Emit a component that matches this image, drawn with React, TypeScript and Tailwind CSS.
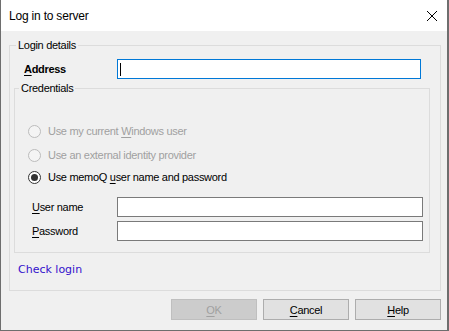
import React from 'react';

function Radio({ label, checked, disabled }: { label: React.ReactNode; checked?: boolean; disabled?: boolean }) {
    return (
        <div className="flex items-center h-[22px]">
            <span
                className={`ml-[13px] w-[13px] h-[13px] rounded-full border flex items-center justify-center ${
                    disabled ? 'border-[#bcbcbc] bg-[#f4f4f4]' : 'border-[#333333] bg-white'
                }`}
            >
                {checked && <span className="w-[7px] h-[7px] rounded-full bg-[#333333]" />}
            </span>
            <span className={`ml-[7px] ${disabled ? 'text-[#a0a0a0]' : 'text-black'}`}>{label}</span>
        </div>
    );
}

export default function App() {
    return (
        <div className="w-[449px] h-[331px] bg-[#f0f0f0] border-l border-b border-r-2 border-[#6e6e6e] text-[11px] tracking-[-0.3px] leading-[16px] text-black flex flex-col font-['Liberation_Sans',Arial,sans-serif]">
            {/* Title bar */}
            <div className="h-[31px] bg-white flex items-center justify-between shrink-0">
                <span className="ml-[8px] text-[12px] tracking-[-0.2px]">Log in to server</span>
                <svg width="12" height="12" viewBox="0 0 12 12" className="mr-[9px]">
                    <path d="M1 1 L11 11 M11 1 L1 11" stroke="#000" strokeWidth="1" fill="none" />
                </svg>
            </div>

            {/* Body */}
            <div className="pt-[6px] pl-[8px]">
                <fieldset className="w-[432px] border border-[#dcdcdc] p-0 m-0 pb-[12px]">
                    <legend className="ml-[6px] px-[2px] leading-[16px]">Login details</legend>

                    {/* Address */}
                    <div className="flex items-center mt-[6px] h-[20px]">
                        <span className="ml-[14px] w-[93px] font-bold">
                            <u className="underline-offset-2">A</u>ddress
                        </span>
                        <div className="w-[304px] h-[20px] bg-white border border-[#0078d7] flex items-center">
                            <span className="ml-[2px] w-px h-[13px] bg-black" />
                        </div>
                    </div>

                    {/* Credentials */}
                    <fieldset className="ml-[4px] mt-[1px] w-[416px] border border-[#dcdcdc] p-0 pb-[11px]">
                        <legend className="ml-[4px] px-[2px] leading-[16px]">Credentials</legend>
                        <div className="mt-[24px]">
                            <Radio disabled label={<>Use my current <u className="underline-offset-2">W</u>indows user</>} />
                        </div>
                        <div className="mt-[2px]">
                            <Radio disabled label="Use an external identity provider" />
                        </div>
                        <Radio checked label={<>Use memoQ <u className="underline-offset-2">u</u>ser name and password</>} />

                        <div className="flex items-center mt-[9px] h-[20px]">
                            <span className="ml-[17px] w-[85px]">
                                <u className="underline-offset-2">U</u>ser name
                            </span>
                            <div className="w-[306px] h-[20px] bg-white border border-[#7a7a7a]" />
                        </div>
                        <div className="flex items-center mt-[4px] h-[20px]">
                            <span className="ml-[17px] w-[85px]">
                                <u className="underline-offset-2">P</u>assword
                            </span>
                            <div className="w-[306px] h-[20px] bg-white border border-[#7a7a7a]" />
                        </div>
                    </fieldset>

                    <div className="mt-[9px] ml-[8px] text-[11px] tracking-normal text-[#3311cc] font-['DejaVu_Sans',Verdana,sans-serif]">
                        Check login
                    </div>
                </fieldset>

                {/* Buttons */}
                <div className="flex justify-end gap-[6px] mt-[8px] w-[432px]">
                    <button className="w-[86px] h-[21px] bg-[#cccccc] border border-[#bfbfbf] text-[#a0a0a0]">
                        <u className="underline-offset-2">O</u>K
                    </button>
                    <button className="w-[86px] h-[21px] bg-[#e1e1e1] border border-[#adadad]">
                        <u className="underline-offset-2">C</u>ancel
                    </button>
                    <button className="w-[86px] h-[21px] bg-[#e1e1e1] border border-[#adadad]">
                        <u className="underline-offset-2">H</u>elp
                    </button>
                </div>
            </div>
        </div>
    );
}
